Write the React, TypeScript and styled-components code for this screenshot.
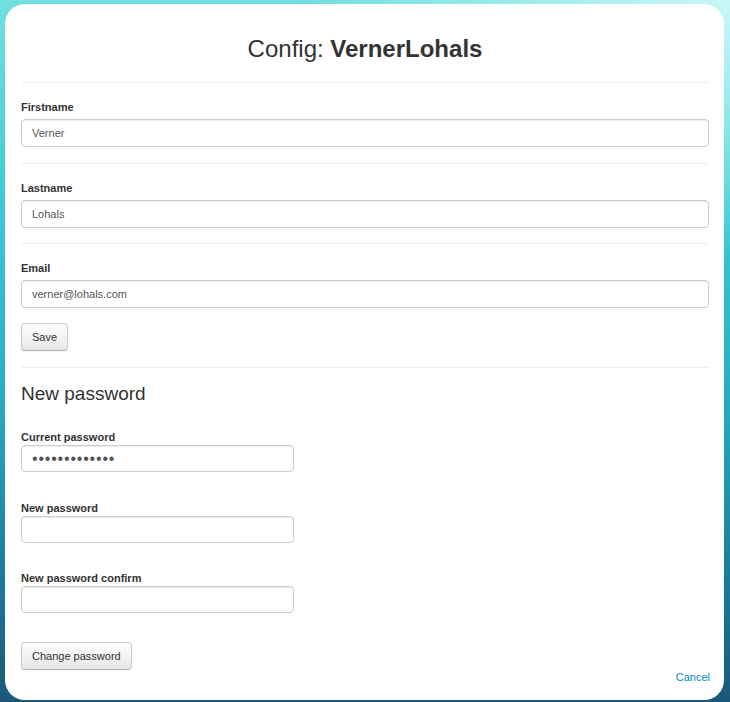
import { FC } from "react";
import styled, { createGlobalStyle } from "styled-components";

const GlobalStyle = createGlobalStyle`
    html, body {
        margin: 0;
        padding: 0;
        height: 100%;
    }
    body {
        font-family: "Liberation Sans", Arial, sans-serif;
        color: #333;
        background:
            radial-gradient(ellipse 420px 260px at 100% 0%, rgba(205, 248, 248, 0.95), rgba(205, 248, 248, 0) 100%),
            linear-gradient(to bottom, #72e0e0 0%, #3cc8d4 30%, #2aaec4 55%, #1f7e9e 80%, #1b5878 100%);
    }
`;

const Page = styled.div`
    box-sizing: border-box;
    height: 702px;
    padding: 4px 6px 2px 5px;
    display: flex;
`;

const Card = styled.div`
    flex: 1;
    background: #fff;
    border-radius: 20px;
    padding: 0 15px 0 16px;
    display: flex;
    flex-direction: column;
    overflow: hidden;
    & > * {
        flex-shrink: 0;
    }
`;

const Title = styled.h1`
    margin: 0;
    padding-top: 31px;
    height: 47px;
    text-align: center;
    font-size: 24px;
    line-height: 28px;
    font-weight: normal;
    color: #333;
    b {
        font-weight: bold;
    }
`;

const Rule = styled.hr`
    margin: 0;
    border: 0;
    border-top: 1px solid #eee;
    height: 0;
`;

const Section = styled.div<{ $top: number; $bottom: number }>`
    padding-top: ${p => p.$top}px;
    padding-bottom: ${p => p.$bottom}px;
`;

const Label = styled.label<{ $tight?: boolean }>`
    display: block;
    font-size: 11px;
    font-weight: bold;
    line-height: 13px;
    color: #333;
    margin-bottom: ${p => (p.$tight ? "1px" : "5px")};
`;

const Input = styled.input<{ $short?: boolean }>`
    display: block;
    box-sizing: border-box;
    width: ${p => (p.$short ? "273px" : "100%")};
    height: ${p => (p.$short ? "27px" : "28px")};
    padding: 4px 10px;
    font-family: "Liberation Sans", Arial, sans-serif;
    font-size: 11px;
    color: #555;
    background: #fff;
    border: 1px solid #ccc;
    border-radius: 4px;
    box-shadow: inset 0 1px 1px rgba(0, 0, 0, 0.075);
    outline: none;
`;

const PasswordInput = styled(Input)`
    font-size: 16px;
    letter-spacing: 0.8px;
    color: #555;
`;

const Spacer = styled.div<{ $h: number }>`
    height: ${p => p.$h}px;
`;

const Button = styled.button`
    box-sizing: border-box;
    height: 28px;
    padding: 0 10px;
    font-family: "Liberation Sans", Arial, sans-serif;
    font-size: 11px;
    color: #333;
    background: linear-gradient(to bottom, #ffffff, #e6e6e6);
    border: 1px solid #ccc;
    border-bottom-color: #b3b3b3;
    border-radius: 4px;
    box-shadow: inset 0 1px 0 rgba(255, 255, 255, 0.2), 0 1px 2px rgba(0, 0, 0, 0.05);
    cursor: pointer;
`;

const SubTitle = styled.h3`
    margin: 0;
    font-size: 19px;
    line-height: 24px;
    font-weight: normal;
    color: #333;
`;

const Footer = styled.div`
    margin-top: auto;
    padding-bottom: 16px;
    display: flex;
    justify-content: flex-end;
`;

const CancelLink = styled.a`
    font-size: 11px;
    color: #0088cc;
    text-decoration: none;
    line-height: 13px;
    margin-right: -1px;
`;

const App: FC = () => {
    return (
        <>
            <GlobalStyle />
            <Page>
                <Card>
                    <Title>
                        Config: <b>VernerLohals</b>
                    </Title>
                    <Rule />
                    <Section $top={18} $bottom={16}>
                        <Label>Firstname</Label>
                        <Input defaultValue="Verner" />
                    </Section>
                    <Rule />
                    <Section $top={18} $bottom={15}>
                        <Label>Lastname</Label>
                        <Input defaultValue="Lohals" />
                    </Section>
                    <Rule />
                    <Section $top={18} $bottom={16}>
                        <Label>Email</Label>
                        <Input defaultValue="verner@lohals.com" />
                        <Spacer $h={15} />
                        <Button>Save</Button>
                    </Section>
                    <Rule />
                    <Section $top={14} $bottom={0}>
                        <SubTitle>New password</SubTitle>
                        <Spacer $h={25} />
                        <Label $tight>Current password</Label>
                        <PasswordInput $short type="password" defaultValue="verner1234567" />
                        <Spacer $h={30} />
                        <Label $tight>New password</Label>
                        <Input $short type="password" />
                        <Spacer $h={29} />
                        <Label $tight>New password confirm</Label>
                        <Input $short type="password" />
                        <Spacer $h={29} />
                        <Button>Change password</Button>
                    </Section>
                    <Footer>
                        <CancelLink href="#">Cancel</CancelLink>
                    </Footer>
                </Card>
            </Page>
        </>
    );
};

export default App;
